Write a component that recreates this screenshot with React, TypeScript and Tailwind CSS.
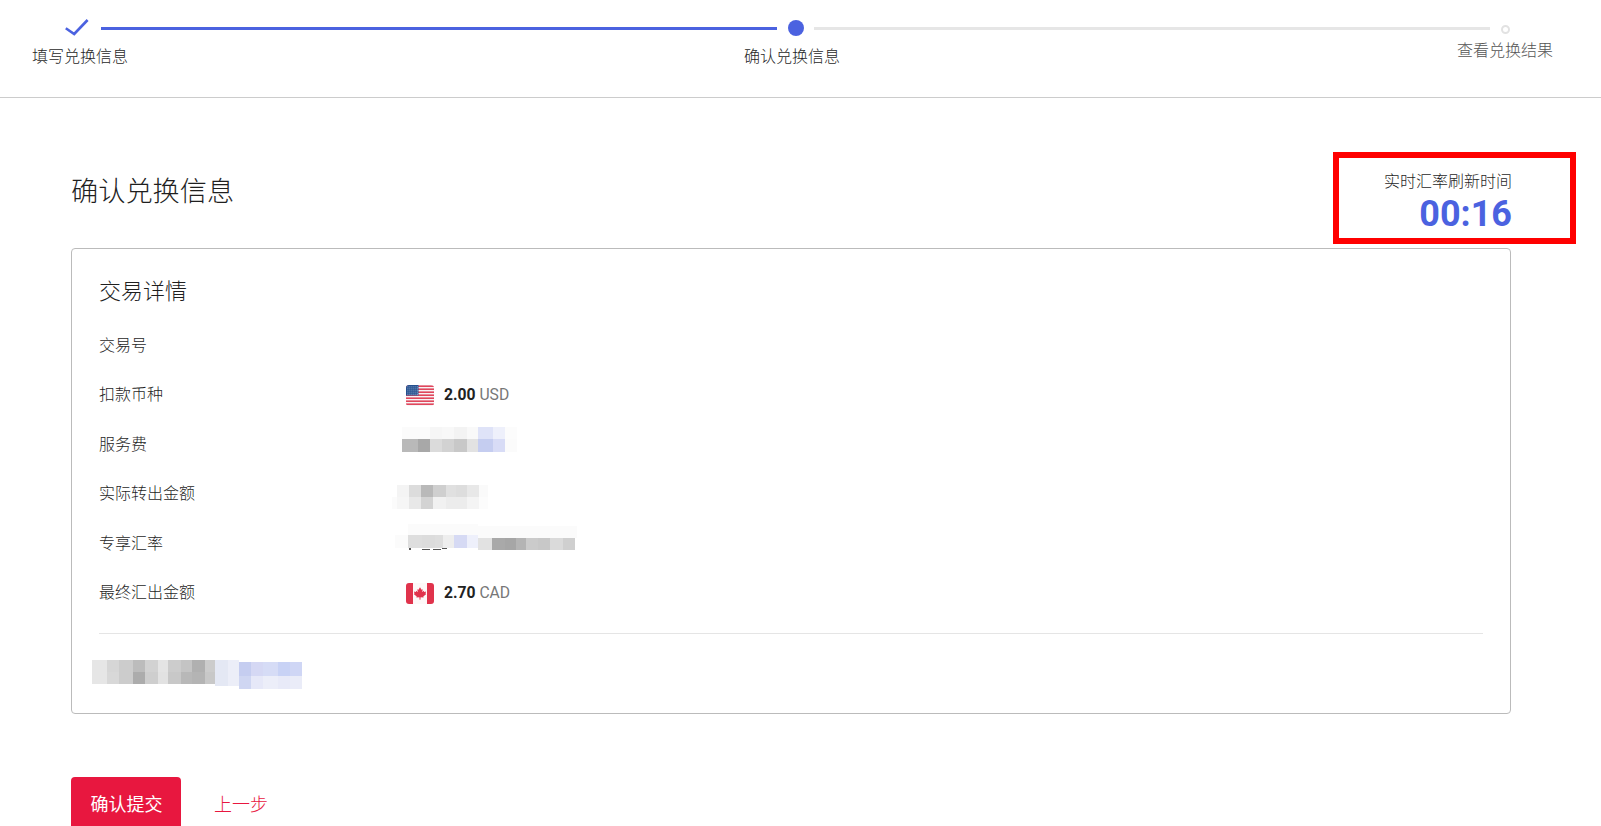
import React from "react";

type Strip = { x: number; y: number; h: number; cells: [number, string][] };

// pixelated (redacted) values, units are 1/3 px because they were read from a 3x crop
function Mosaic({ w, h, strips, marks = [], className = "" }: { w: number; h: number; strips: Strip[]; marks?: number[][]; className?: string }) {
  return (
    <svg width={w / 3} height={h / 3} viewBox={`0 0 ${w} ${h}`} shapeRendering="crispEdges" className={`shrink-0 ${className}`}>
      {strips.map((s, i) => {
        let x = s.x;
        return s.cells.map(([cw, color], j) => {
          const r = <rect key={`${i}-${j}`} x={x} y={s.y} width={cw} height={s.h} fill={color} />;
          x += cw;
          return r;
        });
      })}
      {marks.map((m, i) => (
        <rect key={i} x={m[0]} y={m[1]} width={m[2]} height={m[3]} fill="#555" />
      ))}
    </svg>
  );
}

function UsFlag() {
  return (
    <svg width="28" height="21" viewBox="0 0 28 21" className="shrink-0">
      <defs>
        <clipPath id="us-clip">
          <rect width="28" height="21" rx="3" />
        </clipPath>
      </defs>
      <g clipPath="url(#us-clip)">
        <rect width="28" height="21" fill="#f7f3f5" />
        {[0, 3, 6, 9, 12, 15, 18].map((y) => (
          <rect key={y} x="0" y={y + 0.4} width="28" height="1.6" fill="#e0475c" />
        ))}
        <rect width="12.5" height="10.5" fill="#24508f" />
        {[1.5, 3.5, 5.5, 7.5, 9.3].map((y) =>
          [1.5, 3.5, 5.5, 7.5, 9.5, 11.2].map((x) => <rect key={`${x}-${y}`} x={x} y={y} width="0.8" height="0.8" fill="#c9d6ea" />)
        )}
      </g>
    </svg>
  );
}

function CaFlag() {
  return (
    <svg width="28" height="21" viewBox="0 0 28 21" className="shrink-0">
      <defs>
        <clipPath id="ca-clip">
          <rect width="28" height="21" rx="3" />
        </clipPath>
      </defs>
      <g clipPath="url(#ca-clip)">
        <rect width="28" height="21" fill="#fdf8f8" />
        <rect width="7" height="21" fill="#e0334c" />
        <rect x="21" width="7" height="21" fill="#e0334c" />
        <path
          d="M14 4.2l1.5 2.6 1.2-.6-.5 3 1.6-1.4.4 1.1 1.9-.3-.6 2 .8.5-3 2.4.3 1.1-3-.4-.2 2.6h-.8l-.2-2.6-3 .4.3-1.1-3-2.4.8-.5-.6-2 1.9.3.4-1.1 1.6 1.4-.5-3 1.2.6z"
          fill="#e0334c"
        />
      </g>
    </svg>
  );
}

function Amount({ flag, value, code }: { flag: React.ReactNode; value: string; code: string }) {
  return (
    <div className="flex items-center gap-[10px] ml-[1px]">
      {flag}
      <span className="text-[15.7px]">
        <b className="font-bold text-[#222]">{value}</b> <span className="font-normal text-[#777]">{code}</span>
      </span>
    </div>
  );
}

const feeMosaic = (
  <Mosaic
    w={365}
    h={80}
    className="ml-[-10px] mt-[-9px]"
    strips={[
      { x: 22, y: 0, h: 36, cells: [[48, "#fbfbfb"], [35, "#fbfbfb"], [37, "#f6f6f6"], [36, "#f8f8f8"], [37, "#f3f3f3"], [35, "#f9f9f9"], [45, "#dfe3f8"], [35, "#eef0fb"], [35, "#fcfcfc"]] },
      { x: 22, y: 36, h: 38, cells: [[48, "#b9b9b9"], [35, "#a8a8a8"], [37, "#dbdbdb"], [36, "#d2d2d2"], [37, "#c8c8c8"], [35, "#e2e2e2"], [45, "#c5cdf0"], [35, "#d8dcf6"], [35, "#fbfbfb"]] },
    ]}
  />
);

const actualMosaic = (
  <Mosaic
    w={290}
    h={80}
    className="ml-[-13px] mt-[7px]"
    strips={[
      { x: 16, y: 2, h: 37, cells: [[35, "#f4f4f4"], [37, "#dcdcdc"], [35, "#b9b9b9"], [38, "#cfcfcf"], [30, "#e0e0e0"], [35, "#dddddd"], [35, "#e8e8e8"], [28, "#fafafa"]] },
      { x: 0, y: 39, h: 36, cells: [[16, "#fbfbfb"], [35, "#f6f6f6"], [37, "#e8e8e8"], [35, "#d3d3d3"], [38, "#f1f1f1"], [30, "#ececec"], [35, "#ececec"], [35, "#f4f4f4"], [28, "#fcfcfc"]] },
    ]}
  />
);

const rateMosaic = (
  <Mosaic
    w={550}
    h={100}
    className="ml-[-10px] mt-[-13px]"
    strips={[
      { x: 40, y: 8, h: 34, cells: [[210, "#fbfbfb"]] },
      { x: 250, y: 15, h: 35, cells: [[295, "#fbfbfb"]] },
      { x: 0, y: 42, h: 38, cells: [[38, "#fbfbfb"], [42, "#dedede"], [40, "#dcdcdc"], [25, "#dedede"], [33, "#eeeeee"], [37, "#d6daf4"], [35, "#eef0fb"]] },
      { x: 250, y: 50, h: 38, cells: [[42, "#e2e2e2"], [38, "#a9a9a9"], [32, "#a6a6a6"], [30, "#b4b4b4"], [38, "#cbcbcb"], [35, "#c8c8c8"], [40, "#dadada"], [35, "#cfcfcf"]] },
    ]}
    marks={[[42, 82, 5, 6], [82, 85, 22, 2], [115, 85, 22, 2], [142, 82, 14, 3]]}
  />
);

const noteMosaic = (
  <Mosaic
    w={640}
    h={92}
    className="ml-[-7px] mt-[26px]"
    strips={[
      { x: 0, y: 0, h: 36, cells: [[46, "#e6e6e6"], [34, "#d6d6d6"], [44, "#cccccc"], [34, "#bcbcbc"], [40, "#d2d2d2"], [30, "#e4e4e4"], [38, "#cccccc"], [34, "#c4c4c4"], [38, "#b0b0b0"], [30, "#cccccc"]] },
      { x: 0, y: 36, h: 36, cells: [[46, "#e6e6e6"], [34, "#d8d8d8"], [44, "#cccccc"], [34, "#acacac"], [40, "#cecece"], [30, "#e2e2e2"], [38, "#c8c8c8"], [34, "#b8b8b8"], [38, "#b4b4b4"], [30, "#c8c8c8"]] },
      { x: 368, y: 0, h: 78, cells: [[40, "#e4e8f4"], [32, "#eceef8"]] },
      { x: 440, y: 6, h: 42, cells: [[38, "#c5cdf0"], [35, "#d5d8f4"], [45, "#d6dcf6"], [35, "#c8d2f5"], [37, "#cfd6f5"]] },
      { x: 440, y: 48, h: 38, cells: [[38, "#cfd6f2"], [35, "#e6e8f8"], [45, "#eceef9"], [35, "#e8eaf8"], [37, "#eaecf8"]] },
    ]}
  />
);

const rows: { label: string; value?: React.ReactNode }[] = [
  { label: "交易号" },
  { label: "扣款币种", value: <Amount flag={<UsFlag />} value="2.00" code="USD" /> },
  { label: "服务费", value: feeMosaic },
  { label: "实际转出金额", value: actualMosaic },
  { label: "专享汇率", value: rateMosaic },
  { label: "最终汇出金额", value: <Amount flag={<CaFlag />} value="2.70" code="CAD" /> },
];

export default function App() {
  return (
    <div className="h-screen overflow-hidden bg-white text-[#1f1f1f] font-light font-['Roboto','Noto_Sans_CJK_SC',sans-serif]">
      {/* stepper */}
      <header className="h-[98px] border-b border-[#ccc] pl-[32px] pr-[49px] flex items-start">
        <div className="w-[95px] shrink-0 flex flex-col">
          <svg width="24" height="17" viewBox="0 0 24 17" fill="none" className="ml-[33px] mt-[19px]">
            <path d="M0.8 9.2L9.2 15L22.6 1" stroke="#4b62e0" strokeWidth="2.6" />
          </svg>
          <span className="mt-[9px] text-[16px] leading-[24px] whitespace-nowrap">填写兑换信息</span>
        </div>
        <div className="flex-1 h-[3px] mt-[27px] ml-[-26px] mr-[-33px] bg-[#4b62e0]" />
        <div className="w-[95px] shrink-0 flex flex-col">
          <div className="w-[16px] h-[16px] rounded-full bg-[#4b62e0] ml-[44px] mt-[20px]" />
          <span className="mt-[9px] text-[16px] leading-[24px] whitespace-nowrap">确认兑换信息</span>
        </div>
        <div className="flex-1 h-[3px] mt-[27px] ml-[-25px] mr-[-33px] bg-[#e6e6e6]" />
        <div className="w-[95px] shrink-0 flex flex-col">
          <div className="w-[9px] h-[9px] rounded-full border-2 border-[#e2e2e2] ml-[44px] mt-[25px]" />
          <span className="mt-[5px] text-[16px] leading-[24px] whitespace-nowrap text-[#555]">查看兑换结果</span>
        </div>
      </header>

      <main className="pl-[71px] pr-[90px]">
        <div className="h-[150px] flex justify-between items-start">
          <h1 className="pt-[74px] text-[27.2px] leading-[40px] font-light">确认兑换信息</h1>
          {/* refresh timer, outlined by the red annotation box */}
          <div className="relative mt-[72px] mr-[-1px] flex flex-col items-end">
            <div className="absolute top-[-18px] left-[-51px] right-[-64px] h-[92px] border-[6px] border-[#ff0000]" />
            <span className="text-[16px] leading-[24px] whitespace-nowrap">实时汇率刷新时间</span>
            <span className="text-[36px] leading-[40px] font-bold text-[#4b62e0]">00:16</span>
          </div>
        </div>

        <section className="h-[466px] border border-[#bbb] rounded-[4px] px-[27px] pt-[28px]">
          <h2 className="text-[22px] leading-[30px] font-light">交易详情</h2>
          <div className="mt-[14px]">
            {rows.map((row) => (
              <div key={row.label} className="h-[49.5px] flex items-center text-[16px]">
                <span className="w-[306px] shrink-0">{row.label}</span>
                {row.value}
              </div>
            ))}
          </div>
          <div className="mt-[14.5px] border-t border-[#e5e5e5]" />
          {noteMosaic}
        </section>

        <div className="mt-[63px] flex items-center gap-[33px]">
          <button className="w-[110px] h-[54px] pl-[1px] rounded-[4px] bg-[#e8173f] text-white text-[18px] font-normal">确认提交</button>
          <button className="text-[18px] text-[#e8173f]">上一步</button>
        </div>
      </main>
    </div>
  );
}
